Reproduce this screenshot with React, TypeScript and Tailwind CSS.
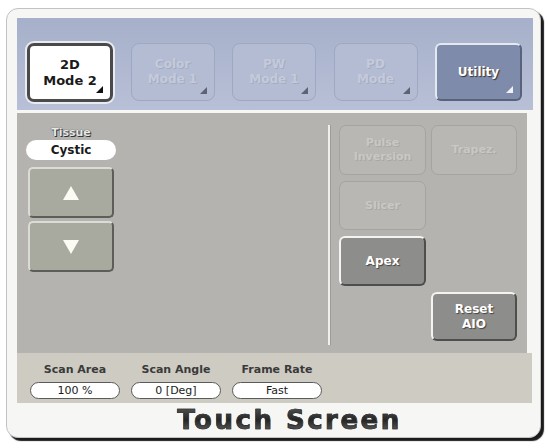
import React from "react";

const FONT = "font-['DejaVu_Sans','Liberation_Sans',sans-serif]";

function Corner({ color }: { color: string }) {
  return (
    <svg width="7" height="7" viewBox="0 0 7 7" className="absolute bottom-[6px] right-[7px]">
      <polygon points="0,7 7,0 7,7" fill={color} />
    </svg>
  );
}

function ModeButton({ lines, kind }: { lines: string[]; kind: "active" | "off" | "utility" }) {
  if (kind === "active") {
    return (
      <div className="relative flex h-[59px] w-[86px] flex-col items-center justify-center rounded-[7px] border-[3px] border-[#4a4a4a] bg-white text-[13px] font-bold leading-[16px] text-[#1a1a1a] shadow-[0_0_0_2px_#e8ebf2]">
        {lines.map((l) => (
          <span key={l}>{l}</span>
        ))}
        <Corner color="#111" />
      </div>
    );
  }
  if (kind === "utility") {
    return (
      <div className="relative flex h-[58px] w-[87px] items-center justify-center rounded-[6px] border-2 border-t-[#e4e8f1] border-l-[#e4e8f1] border-r-[#59627a] border-b-[#59627a] bg-[#7f8bab] text-[12px] font-bold text-white [text-shadow:1px_1px_1px_#333]">
        {lines[0]}
        <Corner color="#f2f2f2" />
      </div>
    );
  }
  return (
    <div className="relative flex h-[58px] w-[84px] flex-col items-center justify-center rounded-[8px] border border-[#9ea8c0] bg-[#b3bcd2] text-[12px] font-bold leading-[15px] text-[#c4cadb] [text-shadow:1px_1px_0_#a3acc3]">
      {lines.map((l) => (
        <span key={l}>{l}</span>
      ))}
      <Corner color="#5d6375" />
    </div>
  );
}

function GrayKey({ lines, on }: { lines: string[]; on?: boolean }) {
  if (on) {
    return (
      <div className="flex h-full w-full flex-col items-center justify-center rounded-[6px] border-2 border-t-[#f4f4f2] border-l-[#f4f4f2] border-r-[#4e4e4c] border-b-[#4e4e4c] bg-[#8d8d8b] text-[12px] font-bold leading-[15px] text-white [text-shadow:1px_1px_1px_#444]">
        {lines.map((l) => (
          <span key={l}>{l}</span>
        ))}
      </div>
    );
  }
  return (
    <div className="flex h-full w-full flex-col items-center justify-center rounded-[7px] border border-[#a5a4a0] bg-[#b8b7b3] text-[11px] font-bold leading-[14px] text-[#c9c8c4] [text-shadow:1px_1px_0_#a9a8a4]">
      {lines.map((l) => (
        <span key={l}>{l}</span>
      ))}
    </div>
  );
}

function Arrow({ up }: { up?: boolean }) {
  return (
    <div className="flex h-[51px] w-[86px] items-center justify-center rounded-[5px] border-2 border-t-[#dcdcd6] border-l-[#dcdcd6] border-r-[#5d5e58] border-b-[#5d5e58] bg-[#a8a99f]">
      <svg width="16" height="14" viewBox="0 0 16 14">
        <polygon points={up ? "8,0 16,14 0,14" : "0,0 16,0 8,14"} fill="#fbfbf4" />
      </svg>
    </div>
  );
}

const readouts = [
  { label: "Scan Area", value: "100 %" },
  { label: "Scan Angle", value: "0 [Deg]" },
  { label: "Frame Rate", value: "Fast" },
];

export default function App() {
  return (
    <div className={`h-[448px] w-[548px] bg-white pl-[6px] pt-[8px] ${FONT}`}>
      <div className="h-[430px] w-[535px] rounded-[12px] border border-[#c2c2c2] bg-[#f6f6f4] pl-[10px] pr-[7px] pt-[9px] shadow-[3px_3px_1px_#1c1c1c]">
        {/* mode selector */}
        <div className="flex h-[92px] items-start justify-between bg-gradient-to-b from-[#a6b0ca] to-[#b7c0d6] pl-[10px] pr-[11px] pt-[25px]">
          <ModeButton kind="active" lines={["2D", "Mode 2"]} />
          <ModeButton kind="off" lines={["Color", "Mode 1"]} />
          <ModeButton kind="off" lines={["PW", "Mode 1"]} />
          <ModeButton kind="off" lines={["PD", "Mode"]} />
          <ModeButton kind="utility" lines={["Utility"]} />
        </div>

        {/* controls */}
        <div className="mt-[3px] flex h-[240px] w-[510px] bg-[#b4b3af] pl-[1px]">
          <div className="w-[310px] pt-[13px]">
            <div className="ml-[8px] flex w-[90px] flex-col items-center">
              <span className="h-[14px] text-[11px] font-bold leading-[14px] text-[#e8e8e8] [text-shadow:0_0_1px_#222,1px_1px_0_#333]">
                Tissue
              </span>
              <div className="flex h-[20px] w-[90px] items-center justify-center rounded-full bg-white text-[12px] font-bold text-[#1a1a1a]">
                Cystic
              </div>
              <div className="mt-[7px]">
                <Arrow up />
              </div>
              <div className="mt-[3px]">
                <Arrow />
              </div>
            </div>
          </div>
          <div className="mt-[12px] h-[220px] w-[3px] border-l-2 border-[#efefed] bg-[#9c9b97]" />
          <div className="grid grid-cols-[87px_86px] grid-rows-[50px_49px_50px_49px] gap-x-[5px] gap-y-[6px] pl-[8px] pt-[12px]">
            <GrayKey lines={["Pulse", "Inversion"]} />
            <GrayKey lines={["Trapez."]} />
            <GrayKey lines={["Slicer"]} />
            <div />
            <GrayKey lines={["Apex"]} on />
            <div />
            <div />
            <GrayKey lines={["Reset", "AIO"]} on />
          </div>
        </div>

        {/* readouts */}
        <div className="flex h-[50px] w-[515px] gap-[11px] bg-[#cecbc2] pl-[13px] pt-[10px]">
          {readouts.map((r) => (
            <div key={r.label} className="flex w-[90px] flex-col items-center">
              <span className="h-[14px] text-[11px] font-bold leading-[14px] text-[#3a3a3a]">{r.label}</span>
              <div className="mt-[5px] flex h-[17px] w-[90px] items-center justify-center rounded-full border border-[#5a5a5a] bg-white text-[11px] leading-none text-[#1a1a1a]">
                {r.value}
              </div>
            </div>
          ))}
        </div>

        <div className="flex h-[34px] items-center justify-center pl-[29px]">
          <span className="bg-gradient-to-b from-[#555] via-[#262626] to-[#666] bg-clip-text text-[26px] font-bold leading-none tracking-[2.5px] text-transparent [-webkit-text-stroke:0.6px_#2a2a2a]">
            Touch Screen
          </span>
        </div>
      </div>
    </div>
  );
}
